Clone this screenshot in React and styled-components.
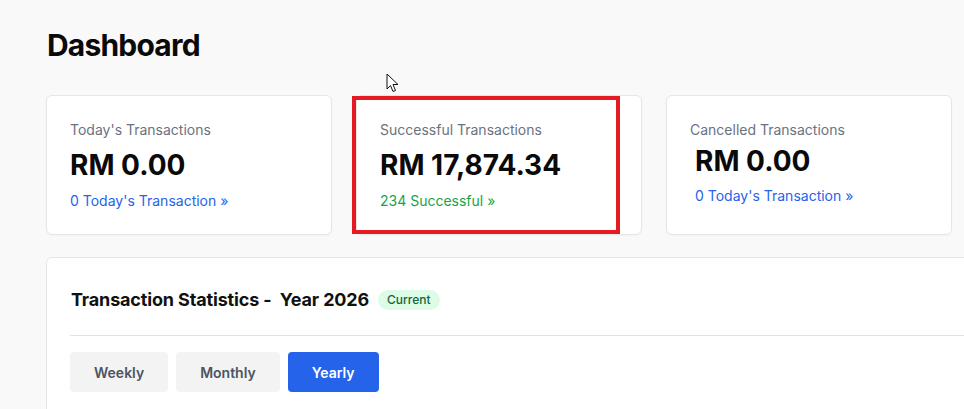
import React from 'react'
import styled, { createGlobalStyle } from 'styled-components'

const Global = createGlobalStyle`
  html, body {
    margin: 0;
    padding: 0;
    background: #f9f9f9;
    overflow: hidden;
  }
  body {
    font-family: Inter, "Noto Sans", "Liberation Sans", sans-serif;
    color: #111;
  }
`;

const Page = styled.div`
  width: 964px;
  height: 409px;
  box-sizing: border-box;
  padding: 26px 0 0 46px;
  position: relative;
  overflow: hidden;
`;

const Title = styled.h1`
  margin: 0 0 0 1px;
  font-size: 30px;
  font-weight: 700;
  line-height: 38px;
  letter-spacing: -0.8px;
  color: #0a0a0a;
`;

const CardRow = styled.div`
  display: grid;
  grid-template-columns: repeat(3, 286px);
  gap: 24px;
  margin-top: 31px;
`;

const Card = styled.div`
  position: relative;
  height: 140px;
  box-sizing: border-box;
  background: #fff;
  border: 1px solid #e6e6e6;
  border-radius: 6px;
  padding: 24px 23px;
  box-shadow: 0 1px 2px rgba(0, 0, 0, 0.03);
`;

const Label = styled.div`
  font-size: 14px;
  line-height: 20px;
  color: #6b7280;
`;

const Amount = styled.div`
  margin-top: ${p => (p.$tight ? 5 : 9)}px;
  margin-left: ${p => p.$indent || 0}px;
  font-size: 28px;
  font-weight: 700;
  line-height: 32px;
  letter-spacing: 0;
  color: #0a0a0a;
`;

const Link = styled.a`
  display: block;
  margin-top: ${p => (p.$tight ? 9 : 10)}px;
  margin-left: ${p => p.$indent || 0}px;
  font-size: 14px;
  line-height: 20px;
  color: ${p => p.$color};
  text-decoration: none;
  cursor: pointer;
`;

const Highlight = styled.div`
  position: absolute;
  left: -5px;
  top: 0;
  width: 268px;
  height: 138px;
  box-sizing: border-box;
  border: 4px solid #e51b24;
  pointer-events: none;
`;

const Pointer = styled.svg`
  position: absolute;
  left: 386px;
  top: 73px;
`;

const Panel = styled.section`
  margin-top: 22px;
  margin-right: -300px;
  height: 220px;
  background: #fff;
  border: 1px solid #e6e6e6;
  border-radius: 6px;
  padding: 0 23px;
`;

const PanelHead = styled.div`
  display: flex;
  align-items: center;
  gap: 9px;
  box-sizing: border-box;
  height: 78px;
  padding-top: 6px;
  border-bottom: 1px solid #e2e2e2;
`;

const PanelTitle = styled.h2`
  margin: 0 0 0 1px;
  font-size: 18px;
  font-weight: 700;
  letter-spacing: -0.15px;
  color: #111;
  white-space: pre;
`;

const Badge = styled.span`
  display: inline-flex;
  align-items: center;
  height: 20px;
  padding: 0 9px;
  border-radius: 10px;
  background: #dcfce7;
  color: #166534;
  font-size: 12px;
  font-weight: 500;
`;

const Tabs = styled.div`
  display: flex;
  gap: 8px;
  padding-top: 16px;
`;

const Tab = styled.button`
  height: 40px;
  padding: 0 24px;
  border: none;
  border-radius: 4px;
  font-family: inherit;
  font-size: 14px;
  font-weight: 600;
  background: ${p => (p.$active ? '#2563eb' : '#f3f3f3')};
  color: ${p => (p.$active ? '#fff' : '#4b5563')};
  cursor: pointer;
`;

const cards = [
  { label: "Today's Transactions", amount: 'RM 0.00', link: "0 Today's Transaction »", color: '#2563eb' },
  { label: 'Successful Transactions', amount: 'RM 17,874.34', link: '234 Successful »', color: '#16a34a', marked: true },
  { label: 'Cancelled Transactions', amount: 'RM 0.00', link: "0 Today's Transaction »", color: '#2563eb', indent: 5, tight: true },
];

export default function App() {
  return (
    <>
      <Global />
      <Page>
        <Title>Dashboard</Title>
        <Pointer width="14" height="20" viewBox="0 0 14 20">
          <path d="M1 1 L1 16 L4.5 12.5 L7 18.5 L9.5 17.5 L7 11.5 L12 11.5 Z" fill="#fff" stroke="#111" strokeWidth="1" strokeLinejoin="round" />
        </Pointer>

        <CardRow>
          {cards.map(c => (
            <Card key={c.label}>
              <Label>{c.label}</Label>
              <Amount $indent={c.indent} $tight={c.tight}>{c.amount}</Amount>
              <Link $color={c.color} $indent={c.indent} $tight={c.tight}>{c.link}</Link>
              {c.marked && <Highlight />}
            </Card>
          ))}
        </CardRow>

        <Panel>
          <PanelHead>
            <PanelTitle>Transaction Statistics -  Year 2026</PanelTitle>
            <Badge>Current</Badge>
          </PanelHead>
          <Tabs>
            <Tab>Weekly</Tab>
            <Tab>Monthly</Tab>
            <Tab $active>Yearly</Tab>
          </Tabs>
        </Panel>
      </Page>
    </>
  )
}
